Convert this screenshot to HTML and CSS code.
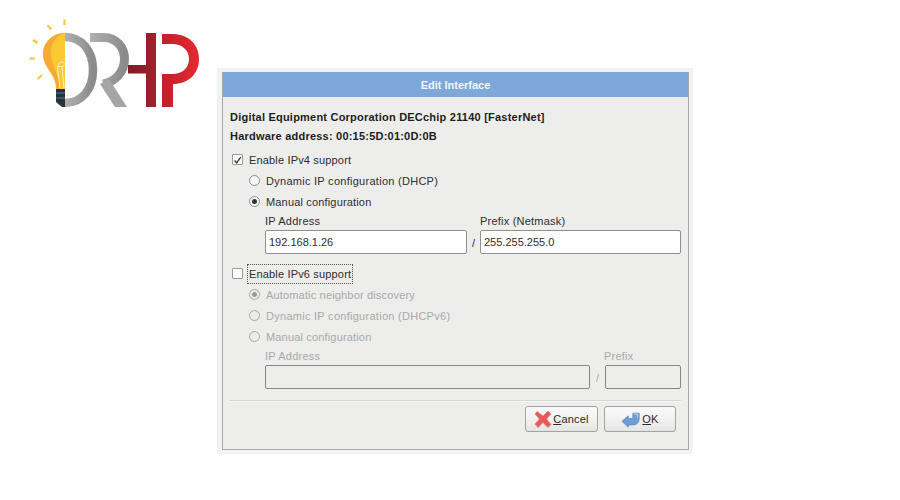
FILE: index.html
```html
<!DOCTYPE html>
<html lang="en">
<head>
<meta charset="utf-8">
<title>Edit Interface</title>
<link rel="stylesheet" href="styles.css">
</head>
<body>
<svg class="logo" width="180" height="100" viewBox="20 10 180 100" aria-label="DRHP">
  <defs>
    <linearGradient id="grey" x1="0" x2="1" y1="0" y2="0"><stop offset="0" stop-color="#b0afb1"/><stop offset="1" stop-color="#8b8a8d"/></linearGradient>
    <linearGradient id="hbar" gradientUnits="userSpaceOnUse" x1="128" x2="156" y1="0" y2="0"><stop offset="0" stop-color="#7c1c26"/><stop offset="1" stop-color="#a3222d"/></linearGradient>
    <linearGradient id="pred" gradientUnits="userSpaceOnUse" x1="162" x2="199" y1="0" y2="0"><stop offset="0" stop-color="#c0202b"/><stop offset="1" stop-color="#e52a32"/></linearGradient>
  </defs>
  <g class="logo-rays">
    <path d="M64.500 19.500V25"/><path d="M47.500 25.500L51.500 29.500"/><path d="M33 40L37.500 43"/><path d="M29.500 58.500H35"/><path d="M37.500 79L42 75"/>
  </g>
  <path class="logo-bulb" d="M65 33C52 33 43 43 43 54C43 66 53 72 55.500 83L56.500 90H65Z"/>
  <path class="logo-bulb-shade" d="M65 33C55 36 50 45 51 55C52 66 59 74 60 90H56.500L55.500 83C53 72 43 66 43 54C43 43 52 33 65 33Z"/>
  <path class="logo-filament" d="M60 88L58 71C57 65 59 62 62 62C65 62 65.500 66 62 66.500H58M62 66.500L64 88"/>
  <path class="logo-base" d="M56 89H65V107H62L56 102Z"/>
  <path class="logo-ridges" d="M56 93H65M56 98H65"/>
  <path class="logo-d" d="M65 37C82 37 93 51 93 70C93 89 82 103 65 103"/>
  <path class="logo-r" d="M90 37.500H104C116 37.500 124.500 47 124.500 59C124.500 72 115 82 103 84"/>
  <path class="logo-leg" d="M100 84L109 79L127 107H115Z"/>
  <path class="logo-bar" d="M128 65H146V33H156V107H146V73.500H128Z"/>
  <path class="logo-p" d="M162 34H172C188 34 199 44 199 59C199 74 188 84 173 84V107H162V74H172C182 74 189 68 189 59C189 50 182 44 172 44H162Z"/>
</svg>

<main class="frame">
  <section class="dialog">
    <h1 class="title">Edit Interface</h1>
    <div class="content">
      <p class="info">Digital Equipment Corporation DECchip 21140 [FasterNet]</p>
      <p class="info info-second">Hardware address: 00:15:5D:01:0D:0B</p>

      <div class="row row-check first-check"><span class="check"><svg width="11" height="11" viewBox="0 0 11 11"><path d="M2 5.500L4.500 8.500L9.500 1.500" fill="none" stroke="#333" stroke-width="1.600"/></svg></span><span>Enable IPv4 support</span></div>
      <div class="row row-radio"><span class="radio"></span><span class="wide">Dynamic IP configuration (DHCP)</span></div>
      <div class="row row-radio"><span class="radio radio-on"></span><span>Manual configuration</span></div>
      <div class="fields">
        <div class="field field-ip4"><label>IP Address</label><div class="entry">192.168.1.26</div></div>
        <span class="slash">/</span>
        <div class="field field-mask"><label>Prefix (Netmask)</label><div class="entry">255.255.255.0</div></div>
      </div>

      <div class="row row-check second-check"><span class="check"></span><span class="focus">Enable IPv6 support</span></div>
      <div class="off">
        <div class="row row-radio"><span class="radio radio-on"></span><span>Automatic neighbor discovery</span></div>
        <div class="row row-radio"><span class="radio"></span><span class="wide">Dynamic IP configuration (DHCPv6)</span></div>
        <div class="row row-radio"><span class="radio"></span><span>Manual configuration</span></div>
        <div class="fields">
          <div class="field field-ip6"><label>IP Address</label><div class="entry"></div></div>
          <span class="slash">/</span>
          <div class="field field-prefix"><label>Prefix</label><div class="entry"></div></div>
        </div>
      </div>

      <hr class="rule">
      <div class="actions">
        <button class="btn btn-cancel" type="button">
          <svg width="18" height="18" viewBox="0 0 18 18"><path d="M3 1.500L9 6L14 1L17 4L12.500 9L17 14.500L14 17.500L9 12.500L4 17.500L1 14L5.500 9L1 4Z" fill="#e8595c" stroke="#c9777a" stroke-width=".6"/></svg>
          <span><u>C</u>ancel</span>
        </button>
        <button class="btn btn-ok" type="button">
          <svg width="20" height="17" viewBox="0 0 22 18"><path d="M1 11L8 5V8H13V2H20V8C20 13 17 15 13 15H8V17.500Z" fill="#6d9fd6" stroke="#4a7db8" stroke-width=".7"/><path d="M14 3H18V7" fill="none" stroke="#b9d3ee" stroke-width="1.200"/></svg>
          <span><u>O</u>K</span>
        </button>
      </div>
    </div>
  </section>
</main>
</body>
</html>
```

FILE: styles.css
```css
* { box-sizing: border-box; }
html, body { margin: 0; padding: 0; }
body {
  width: 900px;
  height: 500px;
  background: #fff;
  font-family: "Liberation Sans", Arial, sans-serif;
  font-size: 11px;
  color: #2e2e2e;
  overflow: hidden;
  position: relative;
}

.logo { position: absolute; left: 20px; top: 10px; }
.logo-rays path { stroke: #f5c93e; stroke-width: 2.200; fill: none; }
.logo-bulb { fill: #fdc933; }
.logo-bulb-shade { fill: #f6aa33; }
.logo-filament { fill: none; stroke: #fff1cf; stroke-width: 1; }
.logo-base { fill: #24333d; }
.logo-ridges { fill: none; stroke: #7d8a93; stroke-width: .8; }
.logo-d { fill: none; stroke: url(#grey); stroke-width: 8.500; }
.logo-r { fill: none; stroke: url(#grey); stroke-width: 9; }
.logo-leg { fill: #a5a4a7; }
.logo-bar { fill: url(#hbar); }
.logo-p { fill: url(#pred); }

.frame {
  margin: 68px 0 0 217px;
  width: 476px;
  height: 386px;
  padding: 4px 4px 4px 5px;
  background: #f2f2f2;
}
.dialog {
  height: 100%;
  border: 1px solid #a9aaa8;
  border-top: 0;
  background: #ededec;
  display: flex;
  flex-direction: column;
}
.title {
  margin: 0;
  height: 25px;
  flex: none;
  background: #7ea8d7;
  color: #f4f6f9;
  font-size: 11px;
  font-weight: bold;
  text-align: center;
  line-height: 26px;
}
.content {
  padding: 0 7px 0 7px;
  flex: 1;
}
.info {
  margin: 0;
  height: 19px;
  line-height: 19px;
  font-weight: bold;
  color: #1d1d1d;
  letter-spacing: 0.02em;
}
.info:first-child { margin-top: 11px; }
.row {
  display: flex;
  align-items: center;
  height: 21px;
  letter-spacing: 0.015em;
}
.wide { letter-spacing: 0.025em; }
.row-check { gap: 6px; }
.first-check { margin-top: 3px; }
.row-radio { padding-left: 19px; gap: 6px; }
.check {
  width: 11px;
  height: 11px;
  flex: none;
  margin-left: 2px;
  background: #fff;
  border: 1px solid #9a9a98;
  border-radius: 1px;
  display: flex;
}
.radio {
  width: 11px;
  height: 11px;
  flex: none;
  background: #f7f7f7;
  border: 1px solid #8c8c8a;
  border-radius: 50%;
  display: flex;
  align-items: center;
  justify-content: center;
}
.radio-on::before {
  content: "";
  width: 5px;
  height: 5px;
  border-radius: 50%;
  background: #333;
}
.fields {
  display: flex;
  align-items: flex-end;
  padding-left: 35px;
}
.field label {
  display: block;
  height: 18px;
  line-height: 19px;
  letter-spacing: 0.02em;
}
.entry {
  height: 24px;
  line-height: 22px;
  padding-left: 3px;
  background: #fff;
  border: 1px solid #8f8f8d;
  border-radius: 2px;
}
.field-ip4 { width: 202px; }
.field-mask { width: 201px; }
.field-ip6 { width: 325px; }
.field-prefix { width: 76px; }
.slash { width: 13px; text-align: center; height: 24px; line-height: 26px; flex: none; }
.off .slash { width: 15px; color: #a9a9a8; }
.second-check { margin-top: 9px; height: 21px; }
.focus {
  outline: 1px dotted #555;
  padding: 3px 1px;
  margin-left: -1px;
}
.off { color: #a9a9a8; }
.off .radio { background: #ececeb; border-color: #a8a8a6; }
.off .radio-on::before { background: #9b9b9a; }
.off .entry { background: #ededec; border-color: #868685; height: 24px; }
.off .field-prefix label { margin-left: -1px; }
.rule {
  margin: 11px 0 0;
  border: 0;
  border-top: 1px solid #d6d6d4;
  border-bottom: 1px solid #f7f7f7;
}
.actions {
  display: flex;
  justify-content: flex-end;
  gap: 6px;
  margin-top: 4px;
  padding-right: 5px;
}
.btn {
  height: 26px;
  padding: 0;
  display: flex;
  align-items: center;
  justify-content: center;
  gap: 1px;
  font: inherit;
  color: #2a2a2a;
  letter-spacing: 0.02em;
  background: linear-gradient(#fafafa, #f1f1f0 55%, #e4e4e3);
  border: 1px solid #a3a3a1;
  border-radius: 3px;
}
.btn-cancel { width: 73px; }
.btn-ok { width: 72px; }
```
